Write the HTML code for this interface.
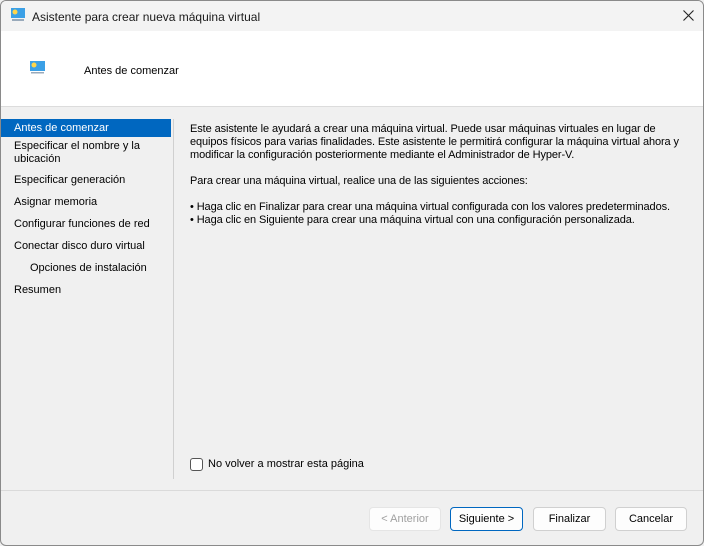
<!DOCTYPE html>
<html><head><meta charset="utf-8"><style>
*{margin:0;padding:0;box-sizing:border-box}
body{width:704px;height:546px;overflow:hidden;font-family:"Liberation Sans",sans-serif;font-size:11px;color:#000;background:#f0f0f0;position:relative}
.win{position:absolute;left:0;top:0;width:704px;height:546px;border:1px solid #8a8a8a;border-radius:6px;overflow:hidden;background:#f0f0f0}
.title{position:absolute;left:0;top:0;width:100%;height:30px;background:#f3f3f3}
.title span{position:absolute;left:31px;top:9px;font-size:12px;color:#1a1a1a}
.head{position:absolute;left:0;top:30px;width:100%;height:76px;background:#fff;border-bottom:1px solid #dcdcdc}
.head span{position:absolute;left:83px;top:34px}
.nav{position:absolute;left:0;top:118px;width:170px}
.nav div{height:22px;line-height:18px;padding-left:13px;white-space:nowrap}
.sel{background:#0067c0;color:#fff;height:18px!important}
.vsep{position:absolute;left:172px;top:118px;width:1px;height:360px;background:#d0d0d0}
.content{position:absolute;left:189px;top:122px;width:515px;line-height:13px;white-space:nowrap;letter-spacing:-0.1px}
.bsep{position:absolute;left:0;top:489px;width:100%;height:1px;background:#dadada}
.btn{position:absolute;top:506px;height:24px;border:1px solid #d0d0d0;border-radius:4px;background:#fdfdfd;text-align:center;line-height:22px}
.cb{position:absolute;left:189px;top:457px;width:13px;height:13px;border:1px solid #555;border-radius:3px;background:#fff}
</style></head><body><div class="win">
<div class="title">
<svg style="position:absolute;left:9px;top:6px" width="16" height="15"><rect x="1" y="1" width="14" height="10" fill="#3ba0e6"/><circle cx="5" cy="5" r="2.5" fill="#ffd54a"/><rect x="2" y="12" width="12" height="2" fill="#9ab"/></svg>
<span>Asistente para crear nueva máquina virtual</span>
<svg style="position:absolute;left:682px;top:9px" width="11" height="11"><path d="M0.5 0.5L10.5 10.5M10.5 0.5L0.5 10.5" stroke="#222" stroke-width="1.1"/></svg></div>
<div class="head">
<svg style="position:absolute;left:28px;top:29px" width="17" height="15"><rect x="1" y="1" width="15" height="10" fill="#3ba0e6"/><circle cx="5" cy="5" r="2.5" fill="#ffd54a"/><rect x="2" y="12" width="13" height="1.5" fill="#9ab"/></svg>
<span>Antes de comenzar</span></div>
<div class="nav">
<div class="sel">Antes de comenzar</div>
<div style="height:34px;line-height:13px;padding-top:3px">Especificar el nombre y la<br>ubicación</div>
<div>Especificar generación</div>
<div>Asignar memoria</div>
<div>Configurar funciones de red</div>
<div>Conectar disco duro virtual</div>
<div style="padding-left:29px">Opciones de instalación</div>
<div>Resumen</div>
</div>
<div class="vsep"></div>
<div class="content">
Este asistente le ayudará a crear una máquina virtual. Puede usar máquinas virtuales en lugar de<br>equipos físicos para varias finalidades. Este asistente le permitirá configurar la máquina virtual ahora y<br>modificar la configuración posteriormente mediante el Administrador de Hyper-V.<br><br>
Para crear una máquina virtual, realice una de las siguientes acciones:<br><br>
• Haga clic en Finalizar para crear una máquina virtual configurada con los valores predeterminados.<br>• Haga clic en Siguiente para crear una máquina virtual con una configuración personalizada.
</div>
<div class="cb"></div><div style="position:absolute;left:207px;top:457px">No volver a mostrar esta página</div>
<div class="bsep"></div>
<div class="btn" style="left:368px;width:72px;color:#a0a0a0;border-color:#e5e5e5">&lt; Anterior</div>
<div class="btn" style="left:449px;width:73px;border-color:#0067c0">Siguiente &gt;</div>
<div class="btn" style="left:532px;width:73px">Finalizar</div>
<div class="btn" style="left:614px;width:72px">Cancelar</div>
</div></body></html>
